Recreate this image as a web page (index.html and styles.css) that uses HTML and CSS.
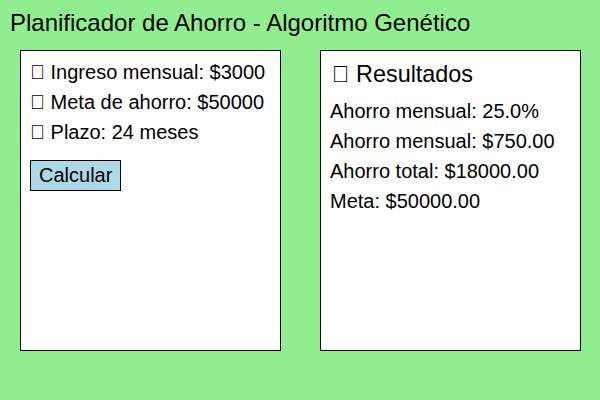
FILE: index.html
```html
<!DOCTYPE html>
<html lang="es">
<head>
<meta charset="utf-8">
<title>Planificador de Ahorro</title>
<link rel="stylesheet" href="styles.css">
</head>
<body>
<h1 class="title">Planificador de Ahorro - Algoritmo Genético</h1>
<main class="panels">
  <section class="box">
    <p class="line">&#xE000; Ingreso mensual: $3000</p>
    <p class="line">&#xE000; Meta de ahorro: $50000</p>
    <p class="line">&#xE000; Plazo: 24 meses</p>
    <button class="btn">Calcular</button>
  </section>
  <section class="box">
    <h2 class="heading">&#xE000; Resultados</h2>
    <p class="line">Ahorro mensual: 25.0%</p>
    <p class="line">Ahorro mensual: $750.00</p>
    <p class="line">Ahorro total: $18000.00</p>
    <p class="line">Meta: $50000.00</p>
  </section>
</main>
</body>
</html>
```
FILE: styles.css
```css
html, body {
  margin: 0;
  padding: 0;
  background: #90ee90;
  font-family: "Liberation Sans", Arial, sans-serif;
  color: #000;
}
.title {
  margin: 0;
  height: 50px;
  padding: 9px 0 0 10px;
  box-sizing: border-box;
  font-size: 24px;
  font-weight: normal;
  line-height: 28px;
}
.panels {
  display: flex;
  gap: 39px;
  padding-left: 20px;
}
.box {
  width: 261px;
  height: 301px;
  box-sizing: border-box;
  background: #fff;
  border: 1px solid #000;
  padding: 6px 9px;
}
.line {
  margin: 0;
  font-size: 20px;
  line-height: 30px;
}
.heading {
  margin: 2px 0 7px 0;
  padding-left: 2px;
  font-size: 23.4px;
  font-weight: normal;
  line-height: 30px;
}
.btn {
  margin-top: 13px;
  font-family: "Liberation Sans", Arial, sans-serif;
  font-size: 20px;
  background: #add8e6;
  border: 1px solid #000;
  border-radius: 0;
  padding: 0 8px;
  height: 31px;
  color: #000;
}
```
